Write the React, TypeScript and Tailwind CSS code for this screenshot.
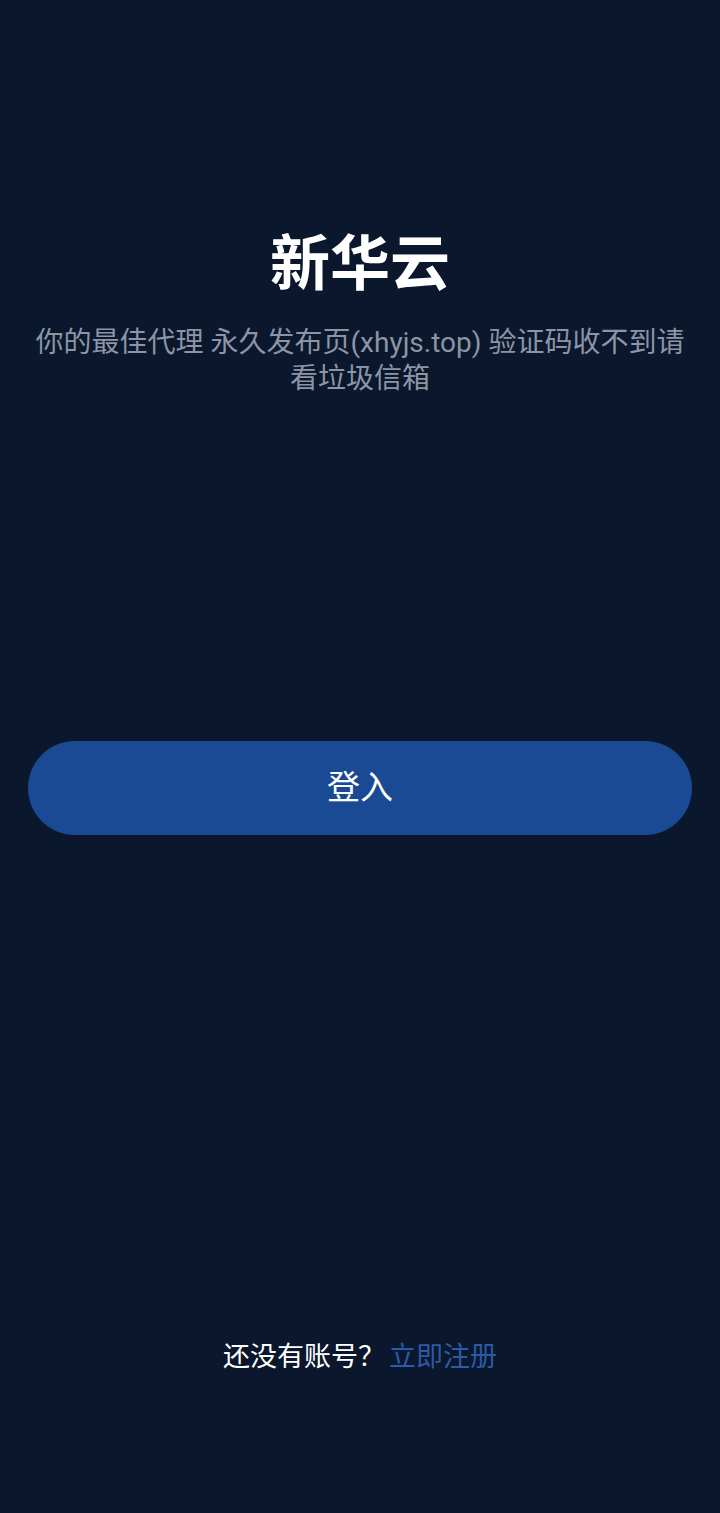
export default function App() {
  return (
    <div
      className="flex min-h-[1513px] w-full flex-col items-center bg-[#0a172d] px-[28px]"
      style={{ fontFamily: 'Roboto, "Noto Sans CJK SC", sans-serif' }}
    >
      {/* Header */}
      <h1 className="mt-[229px] text-[60px] font-bold leading-[72px] text-white">新华云</h1>
      <p className="mt-[24px] text-center text-[28px] leading-[36px] text-[#8b95a5]">
        你的最佳代理 永久发布页(xhyjs.top) 验证码收不到请看垃圾信箱
      </p>

      {/* Login */}
      <button className="mt-[344px] h-[94px] w-full rounded-full bg-[#1a4a94] text-[33px] text-white">
        登入
      </button>

      {/* Footer */}
      <p className="mt-[502px] text-[27px] leading-[36px] text-white">
        还没有账号<span className="font-['Noto_Sans_CJK_SC']">？</span>
        <span className="ml-[4px] text-[#2d5aa6]">立即注册</span>
      </p>
    </div>
  );
}
